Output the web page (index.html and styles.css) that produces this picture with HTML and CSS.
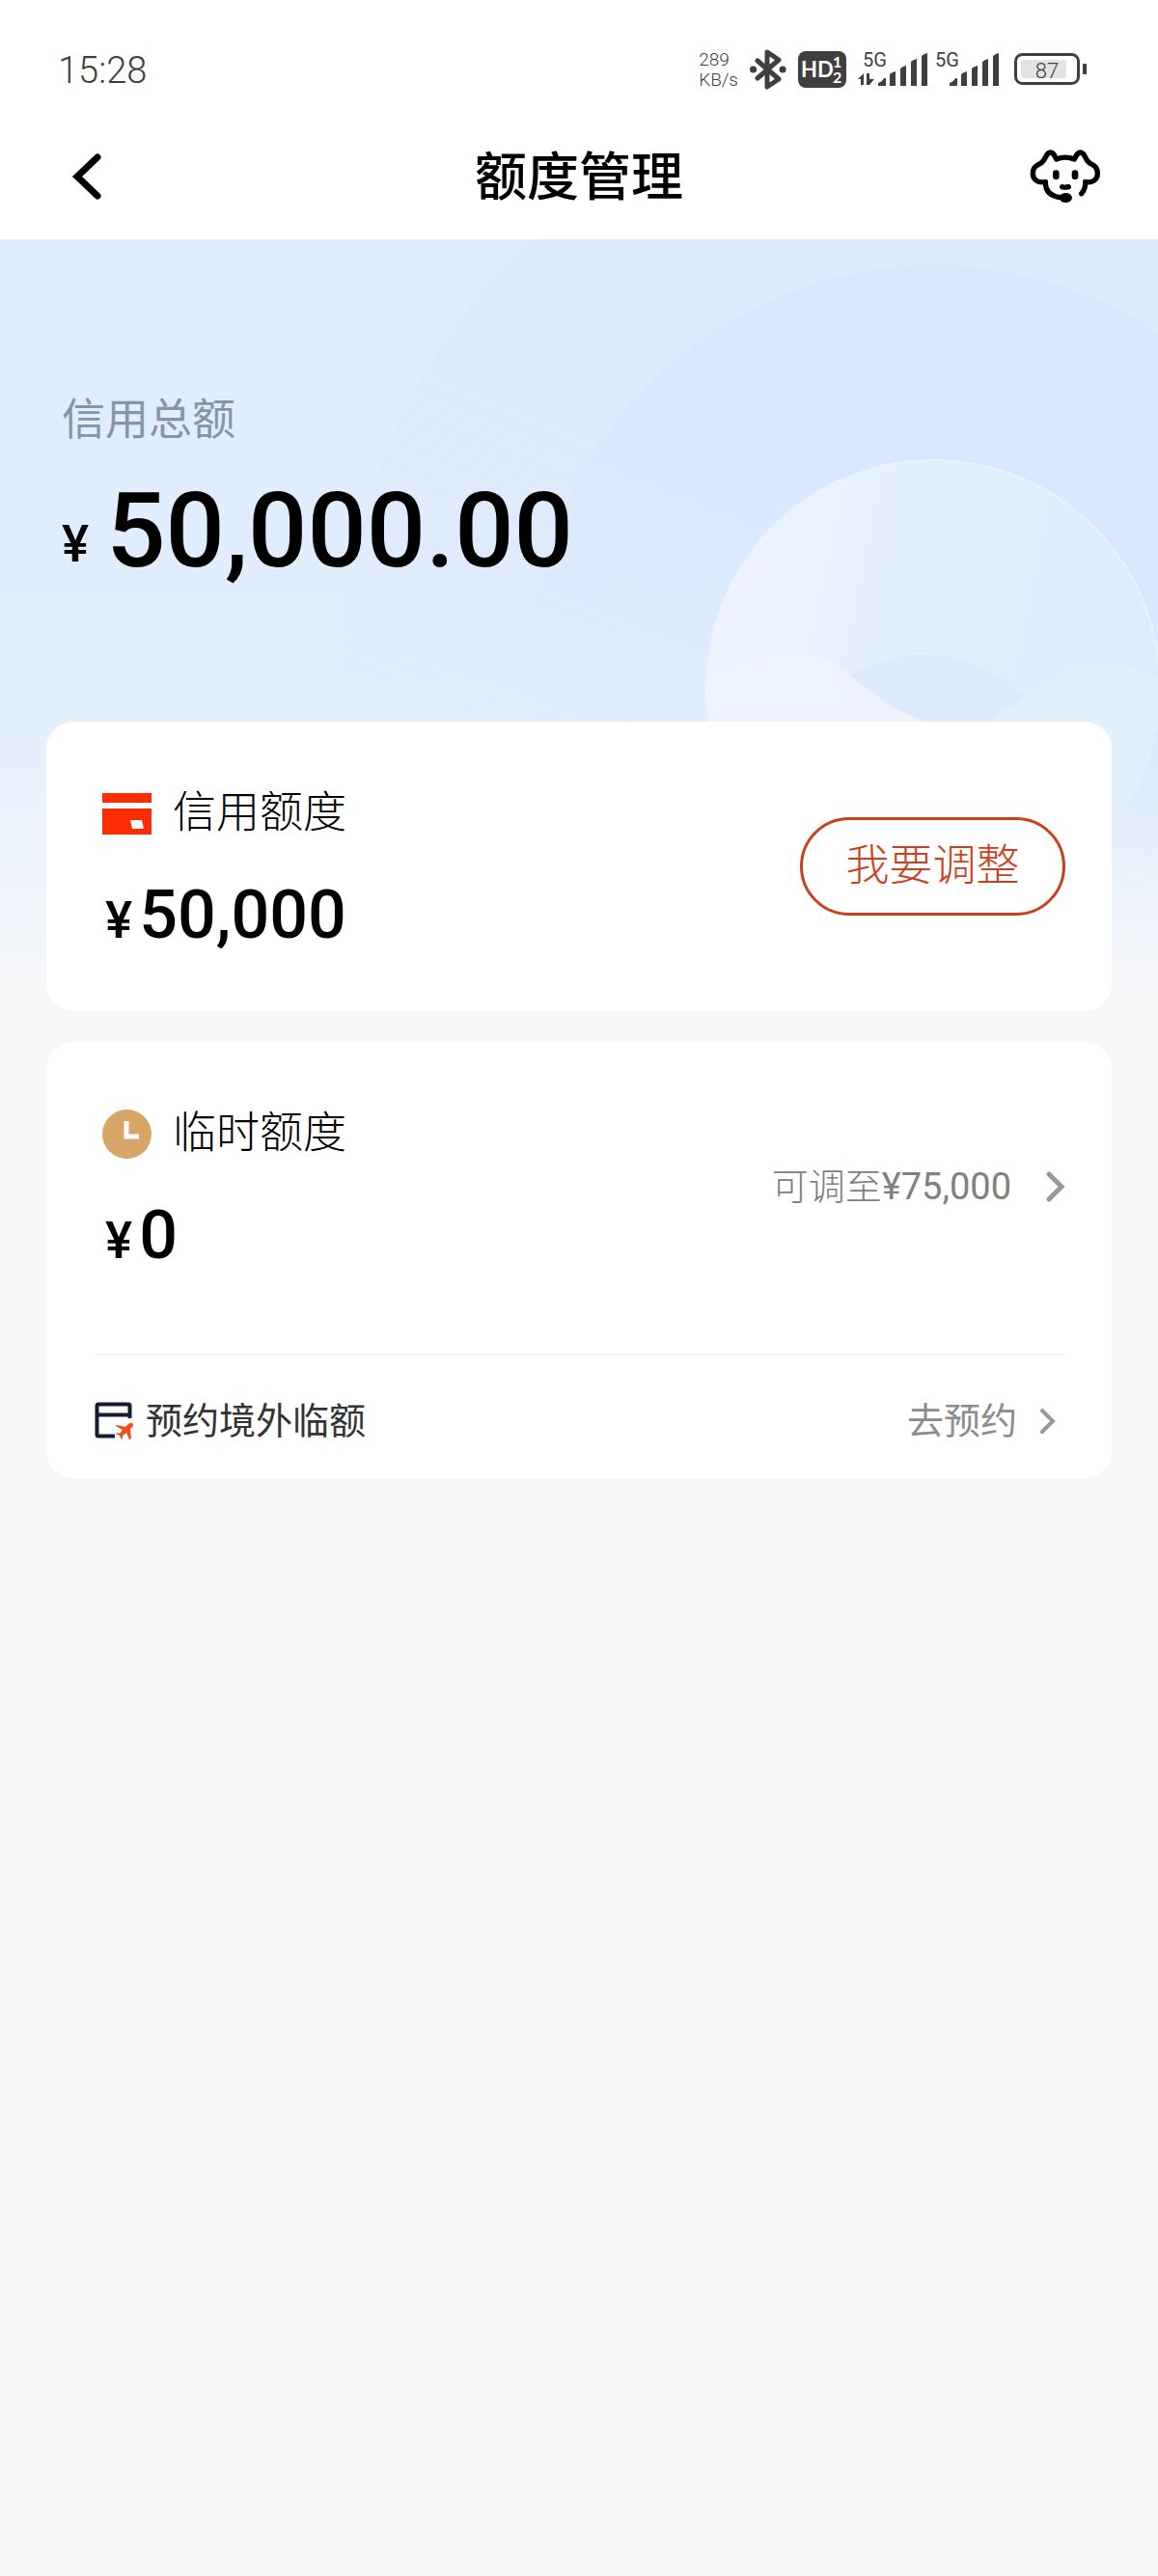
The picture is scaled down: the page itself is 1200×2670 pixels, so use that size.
FILE: index.html
```html
<!DOCTYPE html>
<html lang="zh-CN">
<head>
    <meta charset="UTF-8">
    <meta name="viewport" content="width=device-width, initial-scale=1.0">
    <title>额度管理</title>
    <link rel="stylesheet" href="styles.css">
</head>
<body>
    <div class="status-bar">
        <span class="status-time">15:28</span>
        <div class="status-icons">
            <div class="net-speed"><span>289</span><span>KB/s</span></div>
            <svg class="icon-bluetooth" width="38" height="42" viewBox="0 0 38 42" fill="none" stroke="#3f3f3f" stroke-width="5" stroke-linejoin="round" stroke-linecap="round">
                <path d="M8 12l22 19-12 8V3l12 8L8 30"/>
                <path d="M3.500 21h.1M34 21h.1" stroke-width="7"/>
            </svg>
            <svg class="icon-hd" width="50" height="38" viewBox="0 0 50 38">
                <rect width="50" height="38" rx="8" fill="#3f3f3f"/>
                <text x="3" y="27" class="hd-text">HD</text>
                <text x="36" y="17" class="hd-sub">1</text>
                <text x="36" y="33" class="hd-sub">2</text>
            </svg>
            <svg class="icon-signal" width="72" height="50" viewBox="0 -8 72 50" fill="#3f3f3f">
                <text x="5" y="14" class="signal-text">5G</text>
                <path d="M0 27l6-6v12H3v-6zM9 21h3v6h5l-5 6H9z"/>
                <path d="M21 31q4-1 6-5h2v8h-8zM33 22q2-2 6-3v15h-6zM44 16q2-2 6-3v21h-6zM55 9q2-2 6-3v28h-6zM66 3q2-2 6-3v34h-6z"/>
            </svg>
            <svg class="icon-signal icon-signal-second" width="66" height="50" viewBox="0 -8 66 50" fill="#3f3f3f">
                <text x="0" y="14" class="signal-text">5G</text>
                <path d="M15 31q4-1 6-5h2v8h-8zM27 22q2-2 6-3v15h-6zM38 16q2-2 6-3v21h-6zM49 9q2-2 6-3v28h-6zM60 3q2-2 6-3v34h-6z"/>
            </svg>
            <svg class="icon-battery" width="76" height="34" viewBox="0 0 76 34">
                <rect x="1.500" y="1.500" width="65" height="30" rx="7" fill="none" stroke="#3f3f3f" stroke-width="3"/>
                <rect x="7" y="7" width="47" height="19" rx="2" fill="#e3e3e3"/>
                <rect x="71" y="11" width="4" height="11" rx="1" fill="#3f3f3f"/>
                <text x="34" y="26" text-anchor="middle" class="battery-text">87</text>
            </svg>
        </div>
    </div>

    <header class="nav-bar">
        <button class="nav-button nav-back" type="button" aria-label="返回">
            <svg width="32" height="50" viewBox="0 0 32 50" fill="none" stroke="#000" stroke-width="7" stroke-linecap="round"><path d="M27 5L6 25l21 20"/></svg>
        </button>
        <h1 class="nav-title">额度管理</h1>
        <button class="nav-button nav-service" type="button" aria-label="客服">
            <svg width="74" height="56" viewBox="81 43 222 168" fill="none" stroke="#000" stroke-width="16" stroke-linecap="round" stroke-linejoin="round">
                <path d="M130 144C106 148 91 136 91 117c0-20 12-25 24-31 13-7 16-25 23-31 12-9 19 2 26 18 18-7 38-7 56 0 8-16 15-27 26-18 8 6 10 24 23 31 12 6 23 12 23 31 0 19-15 31-38 27"/>
                <path d="M130 144c0 28 14 46 53 48M254 144c1 15-4 27-12 36"/>
                <ellipse cx="193" cy="193" rx="12" ry="7"/>
                <path d="M163 117v9M222 117v9" stroke-width="20"/>
                <path d="M182 159q9 3 20 0"/>
            </svg>
        </button>
    </header>

    <main class="page-content">
        <svg class="hero-art" viewBox="0 0 1200 800" preserveAspectRatio="xMaxYMin slice" aria-hidden="true">
            <defs>
                <linearGradient id="ringFade" x1="300" y1="800" x2="620" y2="0" gradientUnits="userSpaceOnUse">
                    <stop offset=".4" stop-color="#fff" stop-opacity="0"/>
                    <stop offset=".8" stop-color="#fff"/>
                </linearGradient>
                <mask id="ringMask"><rect width="1200" height="800" fill="url(#ringFade)"/></mask>
                <linearGradient id="ball" x1="0" y1=".4" x2="1" y2=".6">
                    <stop offset="0" stop-color="#edf3ff"/>
                    <stop offset=".5" stop-color="#e2effc"/>
                    <stop offset="1" stop-color="#deecfd"/>
                </linearGradient>
                <clipPath id="ballClip"><circle cx="967" cy="464" r="236"/></clipPath>
            </defs>
            <g mask="url(#ringMask)">
                <circle cx="968" cy="444" r="610" fill="#dfeafc"/>
                <circle cx="968" cy="444" r="417" fill="#dae8fe"/>
            </g>
            <circle cx="967" cy="464" r="235" fill="url(#ball)" stroke="#e9f2fe" stroke-width="2"/>
            <g clip-path="url(#ballClip)">
                <path d="M860 470C910 420 1000 415 1060 472v200H860z" fill="#deebfc"/>
                <path d="M1000 510c60-20 80-70 140-70 30 0 50 10 70 20v240h-210z" fill="#e2effd"/>
                <path d="M725 462c50-40 125-45 160-6 40 30 60 45 110 50h205v200H725z" fill="#edf4ff"/>
                <path d="M960 500h240v200H960z" fill="#e2effd"/>
            </g>
        </svg>

        <section class="total">
            <p class="total-label">信用总额</p>
            <p class="total-amount"><span class="total-currency">¥</span><span>50,000.00</span></p>
        </section>

        <section class="card">
            <div class="card-main">
                <div class="quota">
                    <h2 class="quota-title">
                        <svg width="51" height="51" viewBox="0 0 51 51">
                            <path fill="#fb2c02" d="M0 4h51v10H0zM0 20h51v27H0zM29 32l2 9h12l-2-9z" fill-rule="evenodd"/>
                        </svg>
                        信用额度
                    </h2>
                    <p class="quota-amount"><span class="quota-currency">¥</span><span>50,000</span></p>
                </div>
                <button class="adjust-button" type="button">我要调整</button>
            </div>
        </section>

        <section class="card">
            <div class="card-main card-main-temp">
                <div class="quota">
                    <h2 class="quota-title">
                        <svg width="51" height="51" viewBox="0 0 51 51">
                            <circle cx="25.500" cy="25.500" r="25.500" fill="#d9a566"/>
                            <path d="M25 12v16h13" fill="none" stroke="#fff" stroke-width="5"/>
                        </svg>
                        临时额度
                    </h2>
                    <p class="quota-amount"><span class="quota-currency">¥</span><span>0</span></p>
                </div>
                <a class="temp-link" href="#">
                    <span>可调至<span class="temp-amount">¥75,000</span></span>
                    <svg width="20" height="34" viewBox="0 0 20 34" fill="none" stroke="#999" stroke-width="5" stroke-linecap="round"><path d="M3 4l13 13L3 30"/></svg>
                </a>
            </div>
            <a class="overseas-row" href="#">
                <svg width="40" height="40" viewBox="0 0 40 40">
                    <path d="M36.500 17V4q0-1.500-1.500-1.500H4Q2.500 2.500 2.500 4v30q0 1.500 1.500 1.500h17M2.500 13.500h34" fill="none" stroke="#151c33" stroke-width="4"/>
                    <path d="M39 22q-2-1-5 2l-2 2-9-2-1 1 7 4-3 4-3-1-1 1 4 2 2 4 1-1v-3l4-3 3 7 2-1-1-10 2-2q2-2 0-4z" fill="#f04e14"/>
                </svg>
                <span class="overseas-title">预约境外临额</span>
                <span class="overseas-action">去预约</span>
                <svg width="16" height="28" viewBox="0 0 16 28" fill="none" stroke="#999" stroke-width="4" stroke-linecap="round"><path d="M2 3l11 11L2 25"/></svg>
            </a>
        </section>
    </main>
</body>
</html>
```
FILE: styles.css
```css
/* --- Base --- */
* {
    box-sizing: border-box;
}

body {
    margin: 0;
    min-height: 100vh;
    background-color: #f7f7f7;
    color: #000;
    font-family: Roboto, "Noto Sans CJK SC", sans-serif;
}

h1,
h2,
p {
    margin: 0;
}

a {
    color: inherit;
    text-decoration: none;
}

button {
    padding: 0;
    border: none;
    background: none;
    font-family: inherit;
    cursor: pointer;
}

svg {
    display: block;
    flex-shrink: 0;
}

/* --- Status bar --- */
.status-bar {
    display: flex;
    justify-content: space-between;
    align-items: center;
    height: 118px;
    padding: 26px 73px 0 60px;
    background-color: #fff;
    color: #3f3f3f;
}

.status-time {
    padding-top: 2px;
    font-size: 38px;
    font-weight: 300;
}

.status-icons {
    display: flex;
    align-items: center;
    gap: 12px;
}

.net-speed {
    display: flex;
    flex-direction: column;
    font-size: 19px;
    font-weight: 300;
    line-height: 21px;
}

.hd-text {
    font: 700 22px Lato, sans-serif;
    fill: #fff;
}

.hd-sub {
    font: 700 16px Lato, sans-serif;
    fill: #fff;
}

.signal-text {
    font: 400 20px Roboto, sans-serif;
}

.icon-signal-second {
    margin-left: -4px;
}

.icon-battery {
    margin-left: 4px;
}

.battery-text {
    font: 300 22px Roboto, sans-serif;
    fill: #3f3f3f;
}

/* --- Navigation --- */
.nav-bar {
    display: flex;
    justify-content: space-between;
    align-items: center;
    height: 130px;
    padding: 0 59px;
    background-color: #fff;
}

.nav-button {
    display: flex;
    width: 120px;
}

.nav-back {
    padding-left: 15px;
}

.nav-service {
    justify-content: flex-end;
}

.nav-title {
    padding-top: 4px;
    font-size: 54px;
    font-weight: 500;
    line-height: 80px;
}

/* --- Total amount --- */
.page-content {
    position: relative;
    padding: 0 48px;
    background: linear-gradient(#dfeeff 0, #e0edfe 300px, #e3effc 500px, #f0f4fb 700px, #f7f7f7 800px);
}

/* Soft circles behind the amount and the cards */
.hero-art {
    position: absolute;
    top: 0;
    left: 0;
    width: 100%;
    height: 800px;
    -webkit-mask-image: linear-gradient(#000 550px, transparent 780px);
    mask-image: linear-gradient(#000 550px, transparent 780px);
}

.total {
    position: relative;
    padding: 158px 16px 144px;
}

.total-label {
    color: #8994a3;
    font-size: 45px;
    font-weight: 400;
    line-height: 60px;
}

.total-amount {
    display: flex;
    align-items: flex-end;
    gap: 18px;
    margin-top: 30px;
    font-size: 108px;
    font-weight: 500;
    line-height: 108px;
}

.total-currency {
    font-size: 53px;
    line-height: 80px;
}

/* --- Cards --- */
.card {
    position: relative;
    margin-bottom: 32px;
    padding: 0 48px 0 50px;
    border-radius: 28px;
    background-color: #fff;
}

.card-main {
    display: flex;
    justify-content: space-between;
    align-items: center;
    padding: 65px 0 65px 8px;
}

.card-main-temp {
    padding-bottom: 88px;
    border-bottom: 2px solid #f3f3f3;
}

.quota-title {
    display: flex;
    align-items: center;
    gap: 22px;
    font-size: 45px;
    font-weight: 300;
    line-height: 60px;
}

.quota-amount {
    display: flex;
    align-items: baseline;
    gap: 7px;
    margin-top: 40px;
    padding-left: 3px;
    font-size: 70px;
    font-weight: 500;
    line-height: 70px;
}

.quota-currency {
    font-size: 53px;
    line-height: 53px;
}

.adjust-button {
    width: 275px;
    height: 102px;
    border: 3px solid #cd3e1c;
    border-radius: 51px;
    color: #cd3e1c;
    font-size: 45px;
    font-weight: 300;
    line-height: 60px;
}

.temp-link {
    display: flex;
    align-items: center;
    gap: 36px;
    color: #808080;
    font-size: 38px;
    font-weight: 300;
    line-height: 60px;
}

.temp-amount {
    font-weight: 400;
}

.overseas-row {
    display: flex;
    align-items: center;
    padding: 38px 10px 29px 0;
    font-size: 38px;
    line-height: 60px;
}

.overseas-title {
    flex: 1;
    margin-left: 13px;
    color: #333;
}

.overseas-action {
    margin-right: 24px;
    color: #8c8c8c;
}
```
